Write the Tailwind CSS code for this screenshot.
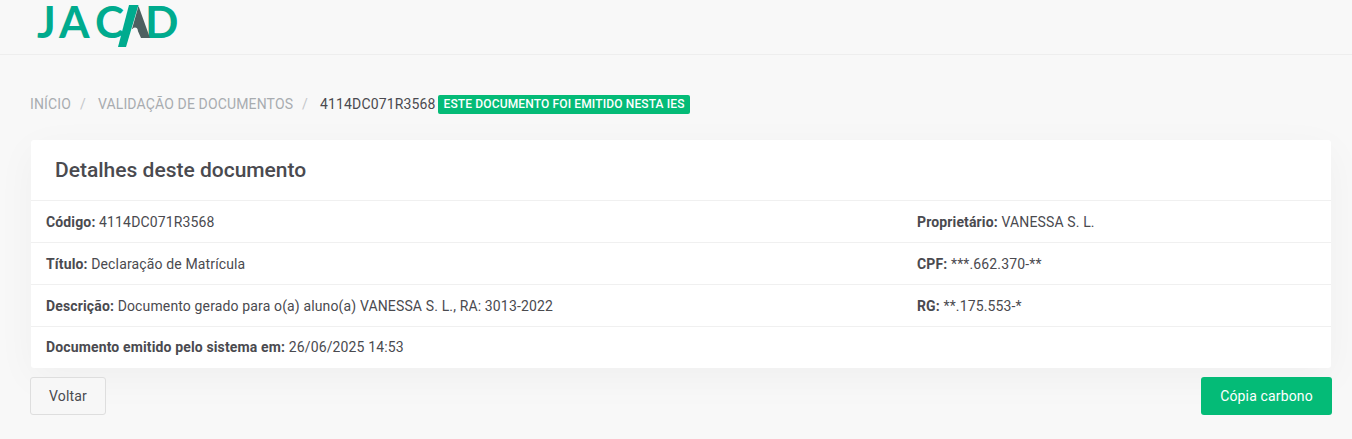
<!DOCTYPE html>
<html lang="pt-BR">
<head>
    <meta charset="UTF-8">
    <meta name="viewport" content="width=device-width, initial-scale=1.0">
    <title>Validação de Documentos - JACAD</title>
    <script src="https://cdn.jsdelivr.net/npm/@tailwindcss/browser@4"></script>
</head>
<body class="bg-[#f8f8f8] font-['Roboto',sans-serif] text-[14px] tracking-[0.14px] text-[#4a4a4f] h-[439px] overflow-hidden">

    <header class="h-[55px] border-b border-[#eeeeee] pl-[38px] pt-[3px]">
        <svg width="146" height="46" viewBox="0 0 146 46" class="block overflow-visible">
            <g font-family="Lato" font-size="44" font-weight="700" fill="#00ab8e">
                <text x="-1" y="35">J</text>
                <text x="21" y="35">A</text>
                <text x="57" y="35">C</text>
                <text x="107" y="35">D</text>
            </g>
            <polygon points="91,2 100.5,2 88,44 80,44" fill="#00ab8e"/>
            <polygon points="100.5,3 112,35 103,35 99,26 94,26" fill="#4d6060"/>
            <circle cx="97" cy="27" r="2.6" fill="#f8f8f8"/>
        </svg>
    </header>

    <main class="pl-[30px] pr-[20px]">
        <nav class="flex items-center h-[20px] mt-[39px] mb-[26px]">
            <a class="text-[#a8acb0]">INÍCIO</a>
            <span class="text-[#c4c7ca] ml-[9px] mr-[12px]">/</span>
            <a class="text-[#a8acb0]">VALIDAÇÃO DE DOCUMENTOS</a>
            <span class="text-[#c4c7ca] ml-[9px] mr-[12px]">/</span>
            <span>4114DC071R3568</span>
            <span class="ml-[3px] px-[5px] h-[19px] leading-[19px] rounded-[2px] bg-[#04bb77] text-white text-[12px] font-medium">ESTE DOCUMENTO FOI EMITIDO NESTA IES</span>
        </nav>

        <section class="ml-px w-[1300px] bg-white rounded-[3px] shadow-[0_10px_40px_rgba(0,0,0,0.04)]">
            <h2 class="h-[61px] pl-[24px] pt-[17px] text-[21px] tracking-normal leading-[26px] font-medium border-b border-[#f0f0f0]">Detalhes deste documento</h2>
            <div class="flex h-[42px] pt-[2px] items-center px-[15px] border-b border-[#f0f0f0]">
                <p class="w-[871px]"><b class="font-bold">Código:</b> 4114DC071R3568</p>
                <p><b class="font-bold">Proprietário:</b> VANESSA S. L.</p>
            </div>
            <div class="flex h-[42px] pt-[2px] items-center px-[15px] border-b border-[#f0f0f0]">
                <p class="w-[871px]"><b class="font-bold">Título:</b> Declaração de Matrícula</p>
                <p><b class="font-bold">CPF:</b> ***.662.370-**</p>
            </div>
            <div class="flex h-[42px] pt-[2px] items-center px-[15px] border-b border-[#f0f0f0]">
                <p class="w-[871px]"><b class="font-bold">Descrição:</b> Documento gerado para o(a) aluno(a) VANESSA S. L., RA: 3013-2022</p>
                <p><b class="font-bold">RG:</b> **.175.553-*</p>
            </div>
            <div class="flex h-[41px] items-center px-[15px]">
                <p><b class="font-bold">Documento emitido pelo sistema em:</b> 26/06/2025 14:53</p>
            </div>
        </section>

        <div class="flex justify-between mt-[9px]">
            <button class="w-[76px] h-[38px] rounded-[3px] border border-[#dedede] bg-[#f7f7f7]">Voltar</button>
            <button class="w-[131px] h-[38px] rounded-[3px] bg-[#04bb77] text-white">Cópia carbono</button>
        </div>
    </main>

</body>
</html>
